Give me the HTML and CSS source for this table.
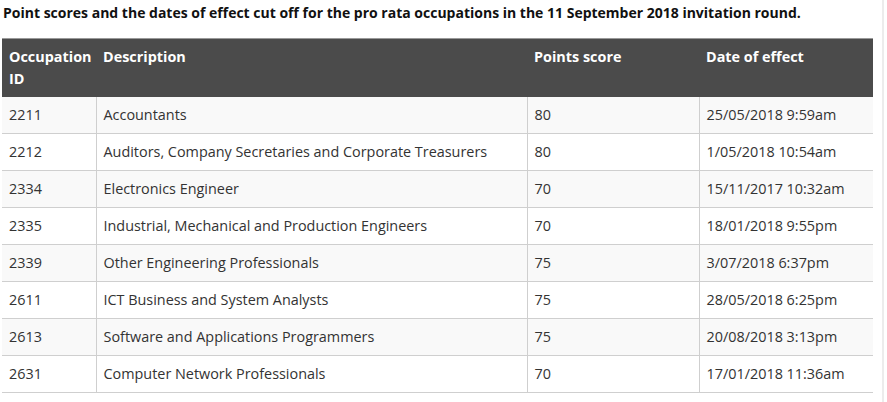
FILE: index.html
```html
<!DOCTYPE html>
<html>
<head>
<meta charset="utf-8">
<link rel="stylesheet" href="styles.css">
</head>
<body>
<div class="page">
  <p class="title">Point scores and the dates of effect cut off for the pro rata occupations in the 11 September 2018 invitation round.</p>
  <table class="scores">
    <thead>
      <tr>
        <th class="c1">Occupation ID</th>
        <th class="c2">Description</th>
        <th class="c3">Points score</th>
        <th class="c4">Date of effect</th>
      </tr>
    </thead>
    <tbody>
      <tr><td>2211</td><td>Accountants</td><td>80</td><td>25/05/2018 9:59am</td></tr>
      <tr><td>2212</td><td>Auditors, Company Secretaries and Corporate Treasurers</td><td>80</td><td>1/05/2018 10:54am</td></tr>
      <tr><td>2334</td><td>Electronics Engineer</td><td>70</td><td>15/11/2017 10:32am</td></tr>
      <tr><td>2335</td><td>Industrial, Mechanical and Production Engineers</td><td>70</td><td>18/01/2018 9:55pm</td></tr>
      <tr><td>2339</td><td>Other Engineering Professionals</td><td>75</td><td>3/07/2018 6:37pm</td></tr>
      <tr><td>2611</td><td>ICT Business and System Analysts</td><td>75</td><td>28/05/2018 6:25pm</td></tr>
      <tr><td>2613</td><td>Software and Applications Programmers</td><td>75</td><td>20/08/2018 3:13pm</td></tr>
      <tr><td>2631</td><td>Computer Network Professionals</td><td>70</td><td>17/01/2018 11:36am</td></tr>
    </tbody>
  </table>
</div>
</body>
</html>
```
FILE: styles.css
```css
html, body {
  margin: 0;
  padding: 0;
  background: #fff;
}
body {
  font-family: "Open Sans", "DejaVu Sans", sans-serif;
  color: #333;
  font-size: 14.4px;
}
.page {
  width: 884px;
  height: 402px;
  border-right: 2px solid #ececec;
  padding-left: 2px;
  box-sizing: border-box;
  overflow: hidden;
}
.title {
  margin: 0;
  padding: 3px 0 0 1px;
  font-weight: 700;
  font-size: 14px;
  line-height: 20px;
  color: #111;
  height: 38px;
  box-sizing: border-box;
}
.scores {
  border-collapse: collapse;
  width: 871px;
  table-layout: fixed;
}
.scores th {
  box-sizing: border-box;
  background: #4b4b4b;
  color: #fff;
  font-weight: 700;
  text-align: left;
  vertical-align: top;
  padding: 7px 7px 7px 7px;
  line-height: 22px;
  border-top: 1px solid #999;
}
.scores .c1 { width: 94px; }
.scores .c2 { width: 431px; }
.scores .c3 { width: 172px; }
.scores .c4 { width: 174px; }
.scores td {
  padding: 7px 7px 7px 7px;
  line-height: 22px;
  border-bottom: 1px solid #cfcfcf;
  border-left: 1px solid #cfcfcf;
  white-space: nowrap;
}
.scores td:first-child {
  border-left: none;
}
.scores tbody tr:nth-child(odd) td {
  background: #f9f9f9;
}
```
